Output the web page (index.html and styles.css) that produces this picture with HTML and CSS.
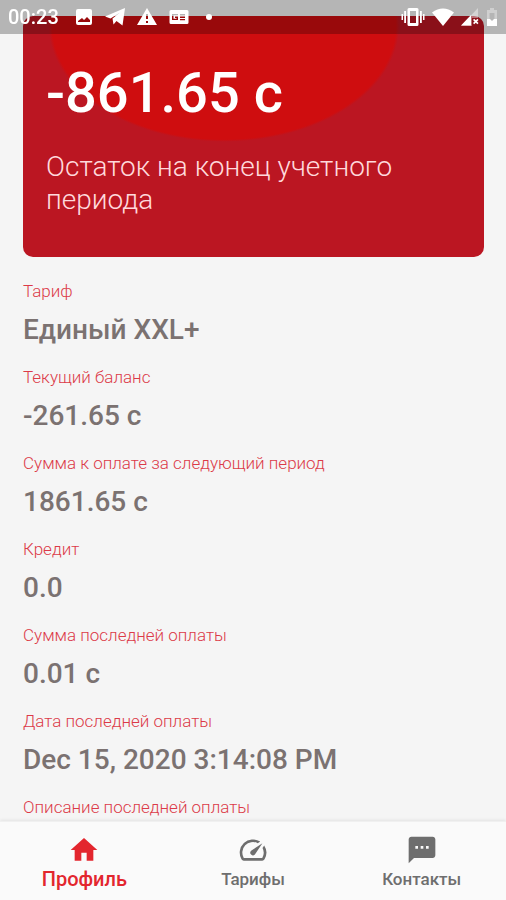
FILE: index.html
```html
<!DOCTYPE html>
<html lang="ru">
<head>
  <meta charset="UTF-8">
  <meta name="viewport" content="width=device-width, initial-scale=1">
  <title>Профиль</title>
  <link rel="stylesheet" href="styles.css">
</head>
<body>

  <header class="statusbar">
    <span class="clock">00:23</span>
    <div class="notifications">
      <svg width="18" height="18" viewBox="0 0 18 18"><path fill-rule="evenodd" d="M3 1h12a2 2 0 0 1 2 2v12a2 2 0 0 1-2 2H3a2 2 0 0 1-2-2V3a2 2 0 0 1 2-2zM3 14h12v-2l-3-3-3 3-2-2-4 3z"/></svg>
      <svg width="20" height="18" viewBox="0 0 20 18"><path d="M0 8.500 20 0l-2.500 17.500-6-4.500-3 3.500-1-6L15 4.500 5.500 10.500z"/></svg>
      <svg width="20" height="18" viewBox="0 0 20 18"><path fill-rule="evenodd" d="M10 0l10 17H0zM9 6v5h2V6zM9 13v2h2v-2z"/></svg>
      <svg width="20" height="18" viewBox="0 0 20 18"><path fill-rule="evenodd" d="M2 2h16a1.500 1.500 0 0 1 1.500 1.500v11A1.500 1.500 0 0 1 18 16H2a1.500 1.500 0 0 1-1.500-1.500v-11A1.500 1.500 0 0 1 2 2zM3 6v6h6V8.500H6V10h1.500v.8H4.500V7.300H9V6zM11 6v1.500h5V6zM11 8.500V10h5V8.500zM11 11v1.200h5V11z"/></svg>
      <svg width="18" height="18" viewBox="0 0 18 18"><circle cx="8" cy="9" r="3"/></svg>
    </div>
    <div class="system">
      <svg width="24" height="18" viewBox="0 0 24 18"><path fill-rule="evenodd" d="M8 0h8a1.500 1.500 0 0 1 1.500 1.500v15A1.500 1.500 0 0 1 16 18H8a1.500 1.500 0 0 1-1.500-1.500v-15A1.500 1.500 0 0 1 8 0zM9 3v12h6V3zM3.200 3h1.800v12H3.200zM19 3h1.800v12H19zM.5 6H2v6H.5zM22 6h1.500v6H22z"/></svg>
      <svg width="22" height="18" viewBox="0 0 22 18"><path d="M0 4.500Q11-3.500 22 4.500L11 18z"/></svg>
      <svg width="18" height="18" viewBox="0 0 18 18"><path opacity=".4" d="M17 0v10h-6v8H0z"/><path d="M0 17.500 10 7v10.500zM12 12l1.200-1.200 1.600 1.500 1.600-1.500 1.100 1.200-1.500 1.500 1.500 1.600-1.100 1.100-1.600-1.500-1.600 1.500-1.200-1.100 1.600-1.600z"/></svg>
      <svg width="12" height="18" viewBox="0 0 12 18"><path opacity=".35" fill-rule="evenodd" d="M4 0h4v2h3v10H8.500V5h-5v7H1V2h3z"/><path d="M1 11h3l2 2 2-2h3v7H1z"/></svg>
    </div>
  </header>

  <main class="screen">
    <section class="card">
      <p class="amount">-861.65 с</p>
      <p class="note">Остаток на конец учетного периода</p>
    </section>

    <dl class="details">
      <div class="item">
        <dt>Тариф</dt>
        <dd>Единый XXL+</dd>
      </div>
      <div class="item">
        <dt>Текущий баланс</dt>
        <dd>-261.65 с</dd>
      </div>
      <div class="item">
        <dt>Сумма к оплате за следующий период</dt>
        <dd>1861.65 с</dd>
      </div>
      <div class="item">
        <dt>Кредит</dt>
        <dd>0.0</dd>
      </div>
      <div class="item">
        <dt>Сумма последней оплаты</dt>
        <dd>0.01 с</dd>
      </div>
      <div class="item">
        <dt>Дата последней оплаты</dt>
        <dd>Dec 15, 2020 3:14:08 PM</dd>
      </div>
      <div class="item">
        <dt>Описание последней оплаты</dt>
      </div>
    </dl>
  </main>

  <nav class="tabs">
    <a href="#profile" class="tab active" aria-current="page">
      <svg width="32" height="32" viewBox="0 0 24 24"><path d="M10 20v-6h4v6h5v-8h3L12 3 2 12h3v8z"/></svg>
      <span>Профиль</span>
    </a>
    <a href="#tariffs" class="tab">
      <svg width="32" height="32" viewBox="0 0 24 24"><path d="M20.380 8.570l-1.230 1.850a8 8 0 0 1-.22 7.580H5.070A8 8 0 0 1 15.580 6.850l1.850-1.230A10 10 0 0 0 3.350 19a2 2 0 0 0 1.720 1h13.850a2 2 0 0 0 1.740-1 10 10 0 0 0-.27-10.440zm-9.790 6.840a2 2 0 0 0 2.830 0l5.660-8.490-8.490 5.660a2 2 0 0 0 0 2.830z"/></svg>
      <span>Тарифы</span>
    </a>
    <a href="#contacts" class="tab">
      <svg width="32" height="32" viewBox="0 0 24 24"><path d="M20 2H4c-1.100 0-1.990.9-1.990 2L2 22l4-4h14c1.100 0 2-.9 2-2V4c0-1.100-.9-2-2-2zM9 11H7V9h2v2zm4 0h-2V9h2v2zm4 0h-2V9h2v2z"/></svg>
      <span>Контакты</span>
    </a>
  </nav>

</body>
</html>
```

FILE: styles.css
```css
* {
  box-sizing: border-box;
}
body {
  margin: 0;
  height: 100vh;
  display: flex;
  flex-direction: column;
  background: #f5f5f5;
  font-family: Roboto, "Noto Sans", sans-serif;
}

.statusbar {
  position: fixed;
  top: 0;
  left: 0;
  right: 0;
  z-index: 1;
  height: 34px;
  padding: 0 8px;
  display: flex;
  align-items: center;
  background: rgba(0, 0, 0, 0.26);
  color: white;
}
.statusbar svg {
  display: block;
  fill: white;
}
.clock {
  font-size: 20px;
  font-weight: 500;
}
.notifications {
  display: flex;
  gap: 12px;
  margin-left: 16px;
}
.system {
  display: flex;
  gap: 7px;
  margin-left: auto;
}

/* content */
.screen {
  flex: 1;
  min-height: 0;
  overflow: hidden;
  padding: 16px 22px 0 23px;
}
.card {
  padding: 44px 22px 41px 23px;
  border-radius: 10px;
  background: radial-gradient(ellipse 38% 48% at 201px 10px, #cf0d0f 98%, #bb1622 100%);
  color: white;
}
.amount {
  margin: 0 0 24px;
  font-size: 56px;
  font-weight: 500;
  line-height: 66px;
}
.note {
  margin: 0;
  font-size: 28px;
  font-weight: 300;
  line-height: 33px;
  color: #ffd9dc;
}
.details {
  margin: 24px 0 0;
}
.item {
  height: 86px;
}
.item dt {
  font-size: 17px;
  font-weight: 300;
  line-height: 20px;
  color: #dc3a48;
}
.item dd {
  margin: 12px 0 0;
  font-size: 28px;
  font-weight: 500;
  line-height: 34px;
  color: #7b7271;
}

/* bottom tabs */
.tabs {
  display: flex;
  height: 79px;
  background: #fafafa;
  border-top: 1px solid #f0f0f0;
  box-shadow: 0 -1px 3px rgba(0, 0, 0, 0.08);
}
.tab {
  flex: 1;
  display: flex;
  flex-direction: column;
  align-items: center;
  padding-top: 12px;
  font-size: 17px;
  font-weight: 500;
  line-height: 26px;
  color: #6e6e6e;
  text-decoration: none;
}
.tab svg {
  fill: currentColor;
}
.tab.active {
  font-size: 20px;
  color: #e3262e;
}
```
